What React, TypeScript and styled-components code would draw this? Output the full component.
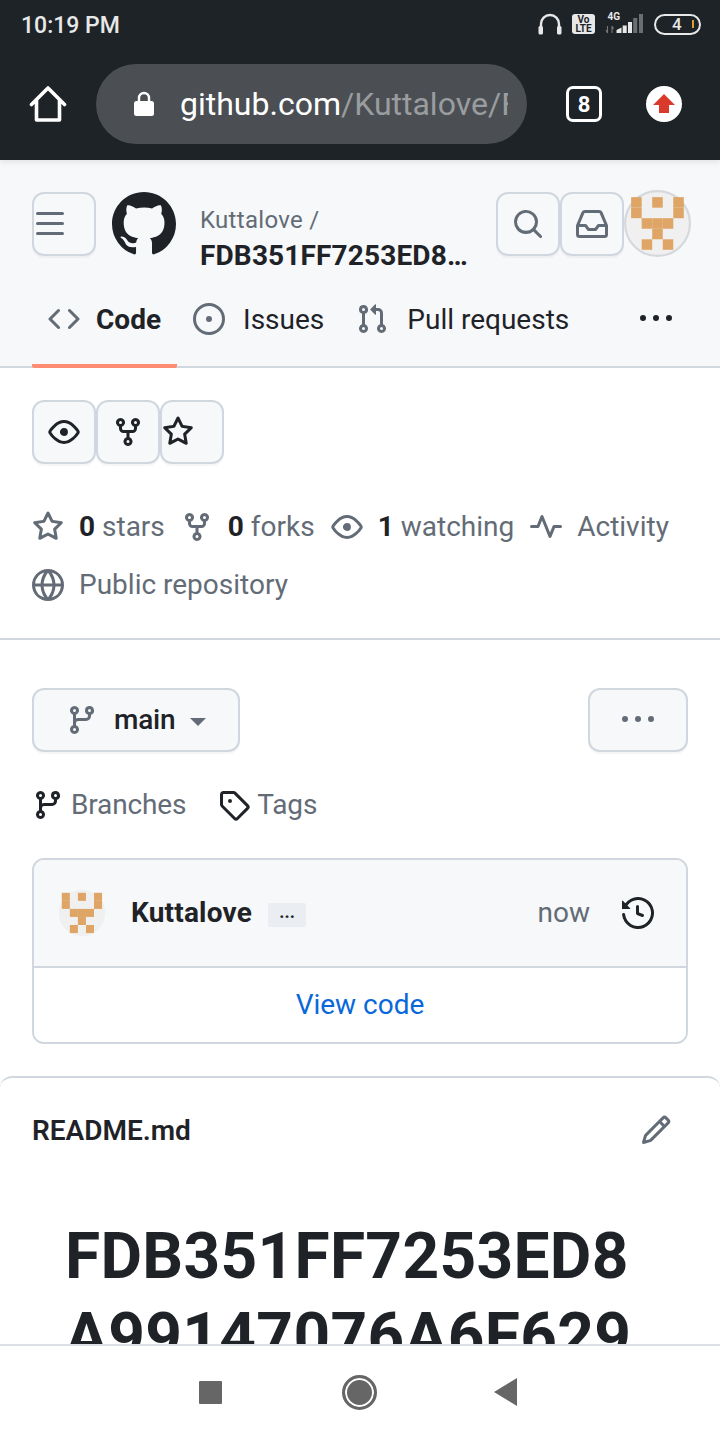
import styled, { createGlobalStyle } from "styled-components";

const icons = {
  bars: "M1 2.75A.75.75 0 0 1 1.75 2h12.5a.75.75 0 0 1 0 1.5H1.75A.75.75 0 0 1 1 2.75Zm0 5A.75.75 0 0 1 1.75 7h12.5a.75.75 0 0 1 0 1.5H1.75A.75.75 0 0 1 1 7.75ZM1.75 12h12.5a.75.75 0 0 1 0 1.5H1.75a.75.75 0 0 1 0-1.5Z",
  github: "M8 0c4.42 0 8 3.58 8 8a8.013 8.013 0 0 1-5.45 7.59c-.4.08-.55-.17-.55-.38 0-.27.01-1.13.01-2.2 0-.75-.25-1.23-.54-1.48 1.78-.2 3.65-.88 3.65-3.95 0-.88-.31-1.59-.82-2.15.08-.2.36-1.02-.08-2.12 0 0-.67-.22-2.2.82-.64-.18-1.32-.27-2-.27-.68 0-1.36.09-2 .27-1.53-1.03-2.2-.82-2.2-.82-.44 1.1-.16 1.92-.08 2.12-.51.56-.82 1.28-.82 2.15 0 3.06 1.86 3.75 3.64 3.95-.23.2-.44.55-.51 1.07-.46.21-1.61.55-2.33-.66-.15-.24-.6-.83-1.23-.82-.67.01-.27.38.01.53.34.19.73.9.82 1.13.16.45.68 1.31 2.69.94 0 .67.01 1.3.01 1.49 0 .21-.15.45-.55.38A7.995 7.995 0 0 1 0 8c0-4.42 3.58-8 8-8Z",
  search: "M10.68 11.74a6 6 0 0 1-7.922-8.982 6 6 0 0 1 8.982 7.922l3.04 3.04a.749.749 0 0 1-.326 1.275.749.749 0 0 1-.734-.215ZM11.5 7a4.499 4.499 0 1 0-8.997 0A4.499 4.499 0 0 0 11.5 7Z",
  inbox: "M2.8 2.06A1.75 1.75 0 0 1 4.41 1h7.18c.7 0 1.333.417 1.61 1.06l2.74 6.395c.04.093.06.194.06.295v4.5A1.75 1.75 0 0 1 14.25 15H1.75A1.75 1.75 0 0 1 0 13.25v-4.5c0-.101.02-.202.06-.295Zm1.61.44a.25.25 0 0 0-.23.152L1.887 8H4.75a.75.75 0 0 1 .6.3L6.625 10h2.75l1.275-1.7a.75.75 0 0 1 .6-.3h2.863L11.82 2.652a.25.25 0 0 0-.23-.152Zm10.09 7h-2.875l-1.275 1.7a.75.75 0 0 1-.6.3h-3.5a.75.75 0 0 1-.6-.3L4.375 9.5H1.5v3.75c0 .138.112.25.25.25h12.5a.25.25 0 0 0 .25-.25Z",
  code: "m11.28 3.22 4.25 4.25a.75.75 0 0 1 0 1.06l-4.25 4.25a.749.749 0 0 1-1.275-.326.749.749 0 0 1 .215-.734L13.94 8l-3.72-3.72a.749.749 0 0 1 .326-1.275.749.749 0 0 1 .734.215Zm-6.56 0a.751.751 0 0 1 1.042.018.751.751 0 0 1 .018 1.042L2.06 8l3.72 3.72a.749.749 0 0 1-.326 1.275.749.749 0 0 1-.734-.215L.47 8.53a.75.75 0 0 1 0-1.06Z",
  issue: "M8 9.5a1.5 1.5 0 1 0 0-3 1.5 1.5 0 0 0 0 3ZM8 0a8 8 0 1 1 0 16A8 8 0 0 1 8 0ZM1.5 8a6.5 6.5 0 1 0 13 0 6.5 6.5 0 0 0-13 0Z",
  pull: "M1.5 3.25a2.25 2.25 0 1 1 3 2.122v5.256a2.251 2.251 0 1 1-1.5 0V5.372A2.25 2.25 0 0 1 1.5 3.25Zm5.677-.177L9.573.677A.25.25 0 0 1 10 .854V2.5h1A2.5 2.5 0 0 1 13.5 5v5.628a2.251 2.251 0 1 1-1.5 0V5a1 1 0 0 0-1-1h-1v1.646a.25.25 0 0 1-.427.177L7.177 3.427a.25.25 0 0 1 0-.354ZM3.75 2.5a.75.75 0 1 0 0 1.5.75.75 0 0 0 0-1.5Zm0 9.5a.75.75 0 1 0 0 1.5.75.75 0 0 0 0-1.5Zm8.25.75a.75.75 0 1 0 1.5 0 .75.75 0 0 0-1.5 0Z",
  kebab: "M8 9a1.5 1.5 0 1 0 0-3 1.5 1.5 0 0 0 0 3ZM1.5 9a1.5 1.5 0 1 0 0-3 1.5 1.5 0 0 0 0 3Zm13 0a1.5 1.5 0 1 0 0-3 1.5 1.5 0 0 0 0 3Z",
  eye: "M8 2c1.981 0 3.671.992 4.933 2.078 1.27 1.091 2.187 2.345 2.637 3.023a1.62 1.62 0 0 1 0 1.798c-.45.678-1.367 1.932-2.637 3.023C11.67 13.008 9.981 14 8 14c-1.981 0-3.671-.992-4.933-2.078C1.797 10.83.88 9.576.43 8.898a1.62 1.62 0 0 1 0-1.798c.45-.677 1.367-1.931 2.637-3.022C4.33 2.992 6.019 2 8 2ZM1.679 7.932a.12.12 0 0 0 0 .136c.411.622 1.241 1.75 2.366 2.717C5.176 11.758 6.527 12.5 8 12.5c1.473 0 2.825-.742 3.955-1.715 1.124-.967 1.954-2.096 2.366-2.717a.12.12 0 0 0 0-.136c-.412-.621-1.242-1.75-2.366-2.717C10.824 4.242 9.473 3.5 8 3.5c-1.473 0-2.825.742-3.955 1.715-1.124.967-1.954 2.096-2.366 2.717ZM8 10a2 2 0 1 1-.001-3.999A2 2 0 0 1 8 10Z",
  fork: "M5 5.372v.878c0 .414.336.75.75.75h4.5a.75.75 0 0 0 .75-.75v-.878a2.25 2.25 0 1 1 1.5 0v.878a2.25 2.25 0 0 1-2.25 2.25h-1.5v2.128a2.251 2.251 0 1 1-1.5 0V8.5h-1.5A2.25 2.25 0 0 1 3.5 6.25v-.878a2.25 2.25 0 1 1 1.5 0ZM5 3.25a.75.75 0 1 0-1.5 0 .75.75 0 0 0 1.5 0Zm6.75.75a.75.75 0 1 0 0-1.5.75.75 0 0 0 0 1.5Zm-3 8.75a.75.75 0 1 0-1.5 0 .75.75 0 0 0 1.5 0Z",
  star: "M8 .25a.75.75 0 0 1 .673.418l1.882 3.815 4.21.612a.75.75 0 0 1 .416 1.279l-3.046 2.97.719 4.192a.751.751 0 0 1-1.088.791L8 12.347l-3.766 1.98a.75.75 0 0 1-1.088-.79l.72-4.194L.818 6.374a.75.75 0 0 1 .416-1.28l4.21-.611L7.327.668A.75.75 0 0 1 8 .25Zm0 2.445L6.615 5.5a.75.75 0 0 1-.564.41l-3.097.45 2.24 2.184a.75.75 0 0 1 .216.664l-.528 3.084 2.769-1.456a.75.75 0 0 1 .698 0l2.77 1.456-.53-3.084a.75.75 0 0 1 .216-.664l2.24-2.183-3.096-.45a.75.75 0 0 1-.564-.41L8 2.694Z",
  pulse: "M6 2c.306 0 .582.187.696.471L10 10.731l1.304-3.26A.751.751 0 0 1 12 7h3.25a.75.75 0 0 1 0 1.5h-2.742l-1.812 4.528a.751.751 0 0 1-1.392 0L6 4.77 4.696 8.03A.75.75 0 0 1 4 8.5H.75a.75.75 0 0 1 0-1.5h2.742l1.812-4.529A.751.751 0 0 1 6 2Z",
  globe: "M8 0a8 8 0 1 1 0 16A8 8 0 0 1 8 0ZM5.78 8.75a9.64 9.64 0 0 0 1.363 4.177c.255.426.542.832.857 1.215.245-.296.551-.705.857-1.215A9.64 9.64 0 0 0 10.22 8.75Zm4.44-1.5a9.64 9.64 0 0 0-1.363-4.177c-.307-.51-.612-.919-.857-1.215a9.927 9.927 0 0 0-.857 1.215A9.64 9.64 0 0 0 5.78 7.25Zm-5.944 1.5H1.543a6.507 6.507 0 0 0 4.666 5.5c-.123-.181-.24-.365-.352-.552-.715-1.192-1.437-2.874-1.581-4.948Zm-2.733-1.5h2.733c.144-2.074.866-3.756 1.58-4.948.12-.197.237-.381.353-.552a6.507 6.507 0 0 0-4.666 5.5Zm10.181 1.5c-.144 2.074-.866 3.756-1.58 4.948-.12.197-.237.381-.353.552a6.507 6.507 0 0 0 4.666-5.5Zm2.733-1.5a6.507 6.507 0 0 0-4.666-5.5c.123.181.24.365.353.552.714 1.192 1.436 2.874 1.58 4.948Z",
  branch: "M9.5 3.25a2.25 2.25 0 1 1 3 2.122V6A2.5 2.5 0 0 1 10 8.5H6a1 1 0 0 0-1 1v1.128a2.251 2.251 0 1 1-1.5 0V5.372a2.25 2.25 0 1 1 1.5 0v1.836A2.493 2.493 0 0 1 6 7h4a1 1 0 0 0 1-1v-.628A2.25 2.25 0 0 1 9.5 3.25Zm-6 0a.75.75 0 1 0 1.5 0 .75.75 0 0 0-1.5 0Zm8.25-.75a.75.75 0 1 0 0 1.5.75.75 0 0 0 0-1.5ZM4.25 12a.75.75 0 1 0 0 1.5.75.75 0 0 0 0-1.5Z",
  tag: "M1 7.775V2.75C1 1.784 1.784 1 2.75 1h5.025c.464 0 .91.184 1.238.513l6.25 6.25a1.75 1.75 0 0 1 0 2.474l-5.026 5.026a1.75 1.75 0 0 1-2.474 0l-6.25-6.25A1.752 1.752 0 0 1 1 7.775Zm1.5 0c0 .066.026.13.073.177l6.25 6.25a.25.25 0 0 0 .354 0l5.025-5.025a.25.25 0 0 0 0-.354l-6.25-6.25a.25.25 0 0 0-.177-.073H2.75a.25.25 0 0 0-.25.25ZM6 5a1 1 0 1 1 0 2 1 1 0 0 1 0-2Z",
  history: "m.427 1.927 1.215 1.215a8.002 8.002 0 1 1-1.6 5.685.75.75 0 1 1 1.493-.154 6.5 6.5 0 1 0 1.18-4.458l1.358 1.358A.25.25 0 0 1 3.896 6H.25A.25.25 0 0 1 0 5.75V2.104a.25.25 0 0 1 .427-.177ZM7.75 4a.75.75 0 0 1 .75.75v2.992l2.028.812a.75.75 0 0 1-.557 1.392l-2.5-1A.751.751 0 0 1 7 8.25v-3.5A.75.75 0 0 1 7.75 4Z",
  pencil: "M11.013 1.427a1.75 1.75 0 0 1 2.474 0l1.086 1.086a1.75 1.75 0 0 1 0 2.474l-8.61 8.61c-.21.21-.47.364-.756.445l-3.251.93a.75.75 0 0 1-.927-.928l.929-3.25c.081-.286.235-.547.445-.758l8.61-8.61Zm.176 4.823L9.75 4.81l-6.286 6.287a.253.253 0 0 0-.064.108l-.558 1.953 1.953-.558a.253.253 0 0 0 .108-.064Zm1.238-3.763a.25.25 0 0 0-.354 0L10.811 3.75l1.439 1.44 1.263-1.263a.25.25 0 0 0 0-.354Z",
};

const GRAY = "#636c76";
const DARK = "#1f2328";
const LINE = "#d0d7de";

const identiconCells = [
  [1, 0, 1, 0, 1],
  [1, 0, 0, 0, 1],
  [0, 1, 1, 1, 0],
  [0, 0, 1, 0, 0],
  [0, 1, 0, 1, 0],
];

function Octicon({ name, size = 32, color }: { name: keyof typeof icons; size?: number; color?: string }) {
  return (
    <IconSvg viewBox="0 0 16 16" width={size} height={size} $color={color}>
      <path fillRule="evenodd" d={icons[name]} />
    </IconSvg>
  );
}

function Identicon({ size, ring }: { size: number; ring?: boolean }) {
  const cell = ring ? 9.75 : 10.4;
  const start = ring ? 6.6 : 4.9;
  return (
    <AvatarSvg viewBox="0 0 62 62" width={size} height={size}>
      <circle cx="31" cy="31" r="30" fill="#f0f0f0" stroke={ring ? "#d5d8dc" : "none"} strokeWidth="2" />
      {identiconCells.flatMap((row, y) =>
        row.map((on, x) =>
          on ? <rect key={`${x}-${y}`} x={start + x * cell} y={start + y * cell} width={cell} height={cell} fill="#dfa566" /> : null
        )
      )}
    </AvatarSvg>
  );
}

function StatusIcons() {
  return (
    <StatusIconRow>
      <svg width="24" height="22" viewBox="0 0 24 22">
        <path d="M3 18V11a9 9 0 0 1 18 0v7" fill="none" stroke="#e8e8e8" strokeWidth="2.4" />
        <rect x="0.500" y="13" width="4.500" height="8.500" rx="1.500" fill="#e8e8e8" />
        <rect x="19" y="13" width="4.500" height="8.500" rx="1.500" fill="#e8e8e8" />
      </svg>
      <VolteBadge>
        <span>Vo</span>
        <span>LTE</span>
      </VolteBadge>
      <svg width="39" height="24" viewBox="0 0 39 24">
        <text x="2.500" y="8" fontSize="10" fontWeight="700" fontFamily="Roboto, sans-serif" fill="#e8e8e8">4G</text>
        <path d="M2.500 14v7M1 18l1.500 3M7 21v-7M7 14l1.500 3" fill="none" stroke="#777" strokeWidth="1.100" />
        <path d="M11.500 21v-3l5-2.500V21zM17.700 21v-7.500h4V21zM23 21V10h4v11z" fill="#e8e8e8" />
        <path d="M28.200 21V6h4v15zM34 21V2h4v19z" fill="#6a6e72" />
      </svg>
      <Battery>
        <span>4</span>
        <BatteryLevel />
      </Battery>
    </StatusIconRow>
  );
}

export default function App() {
  return (
    <>
      <GlobalStyle />
      <Page>
        <BrowserChrome>
          <StatusBar>
            <Clock>10:19 PM</Clock>
            <StatusIcons />
          </StatusBar>
          <Toolbar>
            <svg width="38" height="38" viewBox="0 0 38 38">
              <path d="M2.500 19.500 19 3l16.500 16.500M7.500 15.500V35h23V15.500" fill="none" stroke="#fff" strokeWidth="3.600" strokeLinejoin="round" strokeLinecap="round" />
            </svg>
            <AddressPill>
              <svg width="22" height="26" viewBox="0 0 22 26">
                <path d="M6 11V7a5 5 0 0 1 10 0v4" fill="none" stroke="#fff" strokeWidth="2.400" />
                <rect x="1" y="10" width="20" height="15" rx="2.500" fill="#fff" />
              </svg>
              <AddressText>
                github.com<AddressPath>/Kuttalove/F</AddressPath>
              </AddressText>
            </AddressPill>
            <TabCount>8</TabCount>
            <UpdateDot>
              <svg width="24" height="24" viewBox="0 0 24 24">
                <path d="M12 2 23 13h-6v8H7v-8H1z" fill="#d93a2b" />
              </svg>
            </UpdateDot>
          </Toolbar>
        </BrowserChrome>

        <Viewport>
          <RepoHeader>
            <HeaderTop>
              <SquareButton $align="flex-start">
                <Octicon name="bars" color={GRAY} />
              </SquareButton>
              <LogoSlot>
                <Octicon name="github" size={64} color={DARK} />
              </LogoSlot>
              <RepoTitle>
                <Owner>Kuttalove /</Owner>
                <RepoName>FDB351FF7253ED8A99147076A6F629</RepoName>
              </RepoTitle>
              <SquareButton>
                <Octicon name="search" color={GRAY} />
              </SquareButton>
              <SquareButton>
                <Octicon name="inbox" color={GRAY} />
              </SquareButton>
              <HeaderAvatar>
                <Identicon size={67} ring />
              </HeaderAvatar>
            </HeaderTop>
            <TabBar>
              <Tab $active $gap={16}>
                <Octicon name="code" color={GRAY} />
                Code
              </Tab>
              <Tab $gap={18}>
                <Octicon name="issue" color={GRAY} />
                Issues
              </Tab>
              <Tab $gap={19}>
                <Octicon name="pull" color={GRAY} />
                Pull requests
              </Tab>
              <TabMore>
                <Octicon name="kebab" color={DARK} />
              </TabMore>
            </TabBar>
          </RepoHeader>

          <AboutSection>
            <ActionRow>
              <SquareButton>
                <Octicon name="eye" color={DARK} />
              </SquareButton>
              <SquareButton>
                <Octicon name="fork" color={DARK} />
              </SquareButton>
              <SquareButton $align="flex-start">
                <Octicon name="star" color={DARK} />
              </SquareButton>
            </ActionRow>
            <StatList>
              <Stat>
                <Octicon name="star" color={GRAY} />
                <span>
                  <strong>0</strong> stars
                </span>
              </Stat>
              <Stat>
                <Octicon name="fork" color={GRAY} />
                <span>
                  <strong>0</strong> forks
                </span>
              </Stat>
              <Stat>
                <Octicon name="eye" color={GRAY} />
                <span>
                  <strong>1</strong> watching
                </span>
              </Stat>
              <Stat>
                <Octicon name="pulse" color={GRAY} />
                <span>Activity</span>
              </Stat>
              <Stat>
                <Octicon name="globe" color={GRAY} />
                <span>Public repository</span>
              </Stat>
            </StatList>
          </AboutSection>

          <CodeSection>
            <BranchBar>
              <BranchButton>
                <Octicon name="branch" color={GRAY} />
                <BranchName>main</BranchName>
                <Caret />
              </BranchButton>
              <MoreButton>
                <Octicon name="kebab" color={GRAY} />
              </MoreButton>
            </BranchBar>
            <RefLinks>
              <RefLink>
                <Octicon name="branch" color={DARK} />
                <span>Branches</span>
              </RefLink>
              <RefLink>
                <Octicon name="tag" color={DARK} />
                <span>Tags</span>
              </RefLink>
            </RefLinks>
            <CommitCard>
              <CommitHead>
                <Identicon size={48} />
                <CommitAuthor>Kuttalove</CommitAuthor>
                <EllipsisChip>...</EllipsisChip>
                <CommitTime>now</CommitTime>
                <Octicon name="history" color={DARK} />
              </CommitHead>
              <ViewCode>View code</ViewCode>
            </CommitCard>
          </CodeSection>

          <Readme>
            <ReadmeHead>
              <ReadmeName>README.md</ReadmeName>
              <Octicon name="pencil" color={GRAY} />
            </ReadmeHead>
            <ReadmeTitle>FDB351FF7253ED8A99147076A6F629</ReadmeTitle>
          </Readme>
        </Viewport>

        <SystemNav>
          <NavSquare />
          <NavCircle />
          <NavBack />
        </SystemNav>
      </Page>
    </>
  );
}

const GlobalStyle = createGlobalStyle`
  * {
    box-sizing: border-box;
  }

  body {
    margin: 0;
    background: #fff;
    font-family: Roboto, "Liberation Sans", sans-serif;
  }
`;

const IconSvg = styled.svg<{ $color?: string }>`
  display: block;
  flex-shrink: 0;
  fill: ${(p) => p.$color || "currentColor"};
`;

const AvatarSvg = styled.svg`
  display: block;
  flex-shrink: 0;
`;

const Page = styled.div`
  width: 720px;
  height: 1440px;
  display: flex;
  flex-direction: column;
  overflow: hidden;
  color: ${DARK};
`;

const BrowserChrome = styled.header`
  position: relative;
  z-index: 1;
  flex-shrink: 0;
  background: #1e2327;
  box-shadow: 0 2px 6px rgba(31, 35, 40, 0.1);
`;

const StatusBar = styled.div`
  height: 48px;
  padding: 0 19px 0 21px;
  display: flex;
  align-items: center;
  justify-content: space-between;
`;

const Clock = styled.span`
  padding-top: 2px;
  font-size: 23px;
  font-weight: 500;
  color: #e8e8e8;
`;

const StatusIconRow = styled.div`
  display: flex;
  align-items: center;
  gap: 10px;
`;

const VolteBadge = styled.div`
  width: 23px;
  height: 20px;
  border-radius: 3px;
  background: #e8e8e8;
  color: #1e2327;
  font-size: 10px;
  font-weight: 700;
  line-height: 9px;
  display: flex;
  flex-direction: column;
  align-items: center;
  justify-content: center;
`;

const Battery = styled.div`
  width: 47px;
  height: 21px;
  padding: 0 5px 0 16px;
  border: 2px solid #e8e8e8;
  border-radius: 11px;
  color: #e8e8e8;
  font-size: 17px;
  font-weight: 500;
  display: flex;
  align-items: center;
  justify-content: space-between;
`;

const BatteryLevel = styled.i`
  width: 2px;
  height: 8px;
  background: #e0a030;
`;

const Toolbar = styled.div`
  height: 112px;
  padding: 0 38px 0 29px;
  display: flex;
  align-items: center;
`;

const AddressPill = styled.div`
  width: 431px;
  height: 80px;
  margin-left: 29px;
  padding: 0 19px 0 37px;
  border-radius: 40px;
  background: #4b4f53;
  display: flex;
  align-items: center;
  gap: 25px;
  min-width: 0;
`;

const AddressText = styled.div`
  flex: 1;
  min-width: 0;
  overflow: hidden;
  white-space: nowrap;
  font-size: 32px;
  color: #fff;
`;

const AddressPath = styled.span`
  color: #9a9da0;
`;

const TabCount = styled.div`
  width: 36px;
  height: 36px;
  margin-left: 39px;
  border: 3.5px solid #fff;
  border-radius: 7px;
  color: #fff;
  font-size: 22px;
  font-weight: 700;
  display: flex;
  align-items: center;
  justify-content: center;
`;

const UpdateDot = styled.div`
  width: 36px;
  height: 36px;
  margin-left: auto;
  border-radius: 50%;
  background: #fff;
  display: flex;
  align-items: center;
  justify-content: center;
`;

const Viewport = styled.main`
  flex: 1;
  min-height: 0;
  overflow: hidden;
`;

const RepoHeader = styled.section`
  height: 208px;
  padding-top: 32px;
  background: #f6f8fa;
  border-bottom: 2px solid ${LINE};
`;

const HeaderTop = styled.div`
  height: 82px;
  padding: 0 29px 0 32px;
  display: flex;
  align-items: flex-start;
`;

const SquareButton = styled.div<{ $align?: string }>`
  width: 64px;
  height: 64px;
  flex-shrink: 0;
  background: #f6f8fa;
  border: 2px solid ${LINE};
  border-radius: 12px;
  box-shadow: 0 2px 0 rgba(31, 35, 40, 0.04);
  display: flex;
  align-items: center;
  justify-content: ${(p) => p.$align || "center"};
`;

const LogoSlot = styled.div`
  margin: 0 24px 0 16px;
  flex-shrink: 0;
`;

const RepoTitle = styled.div`
  flex: 1;
  min-width: 0;
  padding: 10px 27px 0 0;
`;

const Owner = styled.div`
  font-size: 24px;
  line-height: 36px;
  letter-spacing: 0.3px;
  color: ${GRAY};
`;

const RepoName = styled.div`
  font-size: 28px;
  line-height: 36px;
  font-weight: 700;
  letter-spacing: 0.15px;
  white-space: nowrap;
  overflow: hidden;
  text-overflow: ellipsis;
`;

const HeaderAvatar = styled.div`
  margin-top: -2px;
  flex-shrink: 0;
`;

const TabBar = styled.nav`
  height: 92px;
  padding: 0 32px;
  display: flex;
  align-items: flex-start;
`;

const Tab = styled.div<{ $active?: boolean; $gap: number }>`
  height: 94px;
  padding: 0 16px;
  display: flex;
  align-items: center;
  gap: ${(p) => p.$gap}px;
  font-size: 28px;
  font-weight: ${(p) => (p.$active ? 700 : 400)};
  color: ${DARK};
  border-bottom: 4px solid ${(p) => (p.$active ? "#fd8c73" : "transparent")};
  border-radius: 0 0 2px 2px;
`;

const TabMore = styled.div`
  height: 90px;
  margin-left: auto;
  padding-right: 16px;
  display: flex;
  align-items: center;
`;

const AboutSection = styled.section`
  padding: 32px;
  border-bottom: 2px solid ${LINE};
`;

const ActionRow = styled.div`
  display: flex;
`;

const StatList = styled.div`
  margin-top: 42px;
  display: flex;
  flex-wrap: wrap;
  gap: 16px;
`;

const Stat = styled.div`
  height: 42px;
  display: flex;
  align-items: center;
  gap: 15px;
  font-size: 28px;
  color: ${GRAY};

  span {
    margin-bottom: 2px;
  }

  strong {
    color: ${DARK};
    font-weight: 700;
  }
`;

const CodeSection = styled.section`
  padding: 48px 32px 32px;
`;

const BranchBar = styled.div`
  display: flex;
  justify-content: space-between;
`;

const BranchButton = styled.div`
  width: 208px;
  height: 64px;
  padding-left: 32px;
  background: #f6f8fa;
  border: 2px solid ${LINE};
  border-radius: 12px;
  box-shadow: 0 2px 0 rgba(31, 35, 40, 0.04);
  display: flex;
  align-items: center;
  gap: 16px;
`;

const BranchName = styled.span`
  margin-bottom: 2px;
  font-size: 28px;
  font-weight: 500;
  letter-spacing: -0.2px;
`;

const Caret = styled.i`
  width: 0;
  height: 0;
  margin: 4px 0 0 -1px;
  border-left: 8px solid transparent;
  border-right: 8px solid transparent;
  border-top: 8px solid ${GRAY};
`;

const MoreButton = styled(BranchButton)`
  width: 100px;
  padding: 0;
  justify-content: center;
`;

const RefLinks = styled.div`
  margin-top: 32px;
  display: flex;
  gap: 32px;
`;

const RefLink = styled.div`
  height: 42px;
  display: flex;
  align-items: center;
  gap: 7px;
  font-size: 28px;
  letter-spacing: -0.15px;
  color: ${GRAY};

  span {
    margin-bottom: 2px;
  }
`;

const CommitCard = styled.div`
  margin-top: 32px;
  border: 2px solid ${LINE};
  border-radius: 12px;
  overflow: hidden;
`;

const CommitHead = styled.div`
  height: 108px;
  padding: 0 32px 0 24px;
  background: #f6f8fa;
  border-bottom: 2px solid ${LINE};
  display: flex;
  align-items: center;
`;

const CommitAuthor = styled.span`
  margin: 0 0 2px 25px;
  font-size: 28px;
  font-weight: 700;
  letter-spacing: 0.2px;
`;

const EllipsisChip = styled.span`
  width: 38px;
  height: 24px;
  margin: 4px 0 0 16px;
  border-radius: 2px;
  background: #eaeef2;
  font-size: 18px;
  font-weight: 700;
  line-height: 18px;
  text-align: center;
`;

const CommitTime = styled.span`
  margin: 0 32px 2px auto;
  font-size: 28px;
  color: ${GRAY};
`;

const ViewCode = styled.div`
  height: 74px;
  padding-bottom: 2px;
  background: #fff;
  display: flex;
  align-items: center;
  justify-content: center;
  font-size: 28px;
  color: #0969da;
`;

const Readme = styled.section`
  border-top: 2px solid ${LINE};
  border-radius: 12px 12px 0 0;
`;

const ReadmeHead = styled.div`
  height: 104px;
  padding: 0 48px 0 32px;
  display: flex;
  align-items: center;
  justify-content: space-between;
`;

const ReadmeName = styled.span`
  font-size: 28px;
  font-weight: 600;
`;

const ReadmeTitle = styled.h1`
  margin: 35px 63px 0 65px;
  font-size: 64px;
  line-height: 80px;
  font-weight: 700;
  letter-spacing: 0.3px;
  word-break: break-all;
`;

const SystemNav = styled.nav`
  flex-shrink: 0;
  height: 96px;
  padding: 0 0 2px 199px;
  background: #fff;
  border-top: 2px solid #dcdfe3;
  display: flex;
  align-items: center;
`;

const NavSquare = styled.i`
  width: 23px;
  height: 23px;
  border-radius: 1px;
  background: #666;
`;

const NavCircle = styled.i`
  width: 35px;
  height: 35px;
  margin-left: 120px;
  border-radius: 50%;
  background: #666;
  border: 3px solid #666;
  box-shadow: inset 0 0 0 2px #fff;
`;

const NavBack = styled.i`
  width: 0;
  height: 0;
  margin-left: 117px;
  border-top: 14px solid transparent;
  border-bottom: 14px solid transparent;
  border-right: 23px solid #666;
`;
